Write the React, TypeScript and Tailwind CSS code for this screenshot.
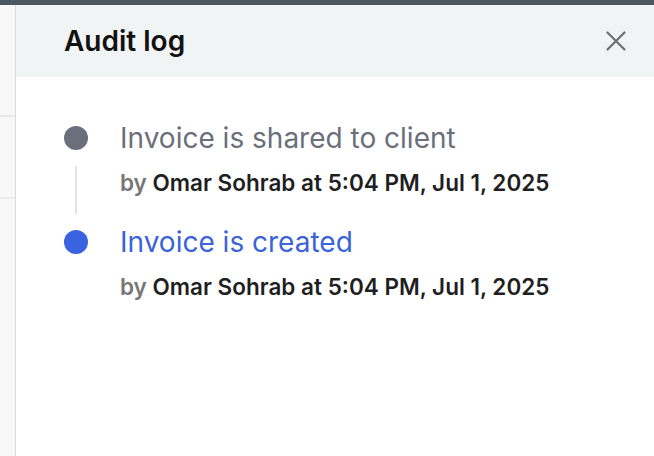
import React from 'react';

type LogEntry = {
  title: string;
  user: string;
  time: string;
  active?: boolean;
};

const entries: LogEntry[] = [
  { title: 'Invoice is shared to client', user: 'Omar Sohrab', time: '5:04 PM, Jul 1, 2025' },
  { title: 'Invoice is created', user: 'Omar Sohrab', time: '5:04 PM, Jul 1, 2025', active: true },
];

const CloseIcon = () => (
  <svg width="20" height="20" viewBox="0 0 20 20" fill="none" stroke="#6e6e70" strokeWidth="2.2" strokeLinecap="round">
    <path d="M1.5 1.5 L18.5 18.5 M18.5 1.5 L1.5 18.5" />
  </svg>
);

export default function App() {
  return (
    <div className="w-[654px] h-[456px] overflow-hidden bg-white flex flex-col" style={{ fontFamily: 'Inter, "Noto Sans", sans-serif' }}>
      <div className="h-[5px] bg-[#4b5863] shrink-0" />
      <div className="flex flex-1">
        {/* background page peeking behind the drawer */}
        <div className="w-[15px] bg-[#f8f8f8] flex flex-col shrink-0">
          <div className="h-[110px]" />
          <div className="h-[2px] bg-[#e6eaee]" />
          <div className="h-[80px]" />
          <div className="h-[2px] bg-[#ececec]" />
        </div>
        <div className="w-px bg-[#dcdcdc] shrink-0" />
        <div className="flex-1 flex flex-col">
          <div className="h-[72px] bg-[#f1f4f5] flex items-center justify-between pl-[48px] pr-[28px] shrink-0">
            <h1 className="text-[28px] leading-[34px] font-semibold text-[#111]">Audit log</h1>
            <CloseIcon />
          </div>
          <ul className="pl-[48px] pt-[45px] flex flex-col">
            {entries.map((e, i) => (
              <li key={i} className="flex h-[104px]">
                <div className="w-[24px] flex flex-col items-center shrink-0">
                  <span className={`w-[24px] h-[24px] rounded-full mt-[4px] ${e.active ? 'bg-[#3a63e2]' : 'bg-[#6b6f7c]'}`} />
                  {i < entries.length - 1 && <span className="w-[1.5px] h-[48px] bg-[#e2e2e2] mt-[16px]" />}
                </div>
                <div className="pl-[32px]">
                  <p className={`text-[28px] leading-[32px] ${e.active ? 'text-[#3a63d8]' : 'text-[#6b6f7c]'}`}>{e.title}</p>
                  <p className="text-[22.5px] leading-[28px] mt-[15px] font-semibold text-[#1f1f1f]">
                    <span className="text-[#777]">by</span> {e.user} at {e.time}
                  </p>
                </div>
              </li>
            ))}
          </ul>
        </div>
      </div>
    </div>
  );
}
